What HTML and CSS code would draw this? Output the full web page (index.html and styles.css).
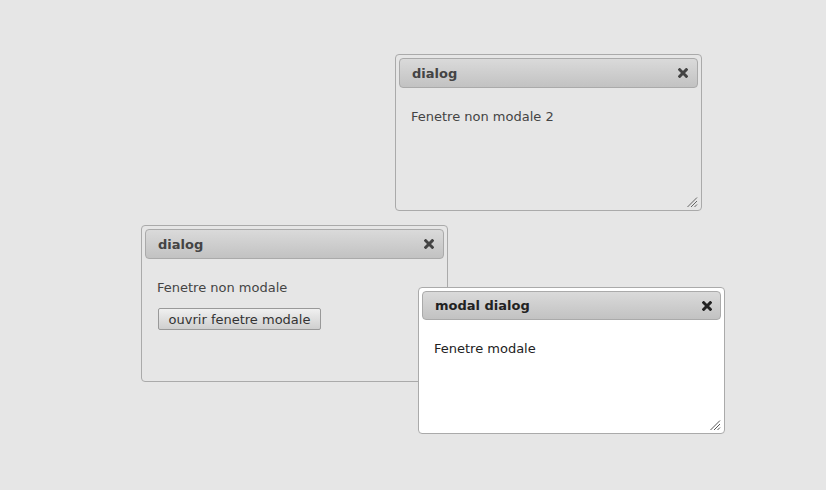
FILE: index.html
```html
<!DOCTYPE html>
<html lang="fr">
<head>
<meta charset="utf-8">
<title>dialogs</title>
<link rel="stylesheet" href="styles.css">
</head>
<body>
<div class="desktop">
  <div class="dialog dialog-top">
    <div class="titlebar">
      <span class="title">dialog</span>
      <svg class="close" width="10" height="10" viewBox="0 0 10 10"><path d="M1.7 1.7 L8.3 8.3 M8.3 1.7 L1.7 8.3" stroke="#444" stroke-width="3" stroke-linecap="square"/></svg>
    </div>
    <div class="content">Fenetre non modale 2</div>
    <svg class="grip" width="12" height="12" viewBox="0 0 12 12"><path d="M11 1.5 L1.5 11 M11 5 L5 11 M11 8.5 L8.5 11" stroke="#555" stroke-width="0.9" fill="none"/></svg>
  </div>

  <div class="dialog dialog-left">
    <div class="titlebar">
      <span class="title">dialog</span>
      <svg class="close" width="10" height="10" viewBox="0 0 10 10"><path d="M1.7 1.7 L8.3 8.3 M8.3 1.7 L1.7 8.3" stroke="#444" stroke-width="3" stroke-linecap="square"/></svg>
    </div>
    <div class="content">
      <div>Fenetre non modale</div>
      <button class="btn">ouvrir fenetre modale</button>
    </div>
  </div>

  <div class="dialog dialog-modal">
    <div class="titlebar">
      <span class="title">modal dialog</span>
      <svg class="close" width="10" height="10" viewBox="0 0 10 10"><path d="M1.7 1.7 L8.3 8.3 M8.3 1.7 L1.7 8.3" stroke="#222" stroke-width="3" stroke-linecap="square"/></svg>
    </div>
    <div class="content">Fenetre modale</div>
    <svg class="grip" width="12" height="12" viewBox="0 0 12 12"><path d="M11 1.5 L1.5 11 M11 5 L5 11 M11 8.5 L8.5 11" stroke="#444" stroke-width="0.9" fill="none"/></svg>
  </div>
</div>
</body>
</html>
```
FILE: styles.css
```css
html, body {
  margin: 0;
  padding: 0;
  background: #e6e6e6;
}
body {
  font-family: "DejaVu Sans", Verdana, sans-serif;
  font-size: 13px;
  color: #444;
}
.desktop {
  position: relative;
  width: 826px;
  height: 490px;
}
.dialog {
  position: absolute;
  box-sizing: border-box;
  width: 307px;
  height: 157px;
  padding: 3px;
  border: 1px solid #aaa;
  border-radius: 4px;
  background: #e6e6e6;
}
.dialog-top { left: 395px; top: 54px; }
.dialog-left { left: 141px; top: 225px; }
.dialog-modal {
  left: 418px;
  top: 287px;
  height: 147px;
  background: #fff;
  color: #222;
}
.titlebar {
  box-sizing: border-box;
  height: 30px;
  display: flex;
  align-items: center;
  justify-content: space-between;
  padding: 0 12px 0 12px;
  border: 1px solid #aaa;
  border-radius: 4px;
  background: linear-gradient(#dadada, #c2c2c2);
}
.dialog-modal .titlebar { height: 29px; }
.title {
  font-weight: bold;
  font-size: 13px;
  color: #444;
}
.dialog-modal .title { color: #222; }
.close { display: block; margin-right: -3px; }
.dialog-modal .close { margin-right: -4px; }
.content {
  padding: 21px 12px 0 12px;
  line-height: 16px;
}
.btn {
  display: block;
  margin: 12px 0 0 1px;
  box-sizing: border-box;
  height: 22px;
  width: 163px;
  padding: 0 8px;
  font-family: "DejaVu Sans", Verdana, sans-serif;
  font-size: 13px;
  color: #333;
  border: 1px solid #999;
  border-radius: 2px;
  background: linear-gradient(#f0f0f0, #cfcfcf);
}
.grip {
  position: absolute;
  right: 3px;
  bottom: 2px;
}
```
